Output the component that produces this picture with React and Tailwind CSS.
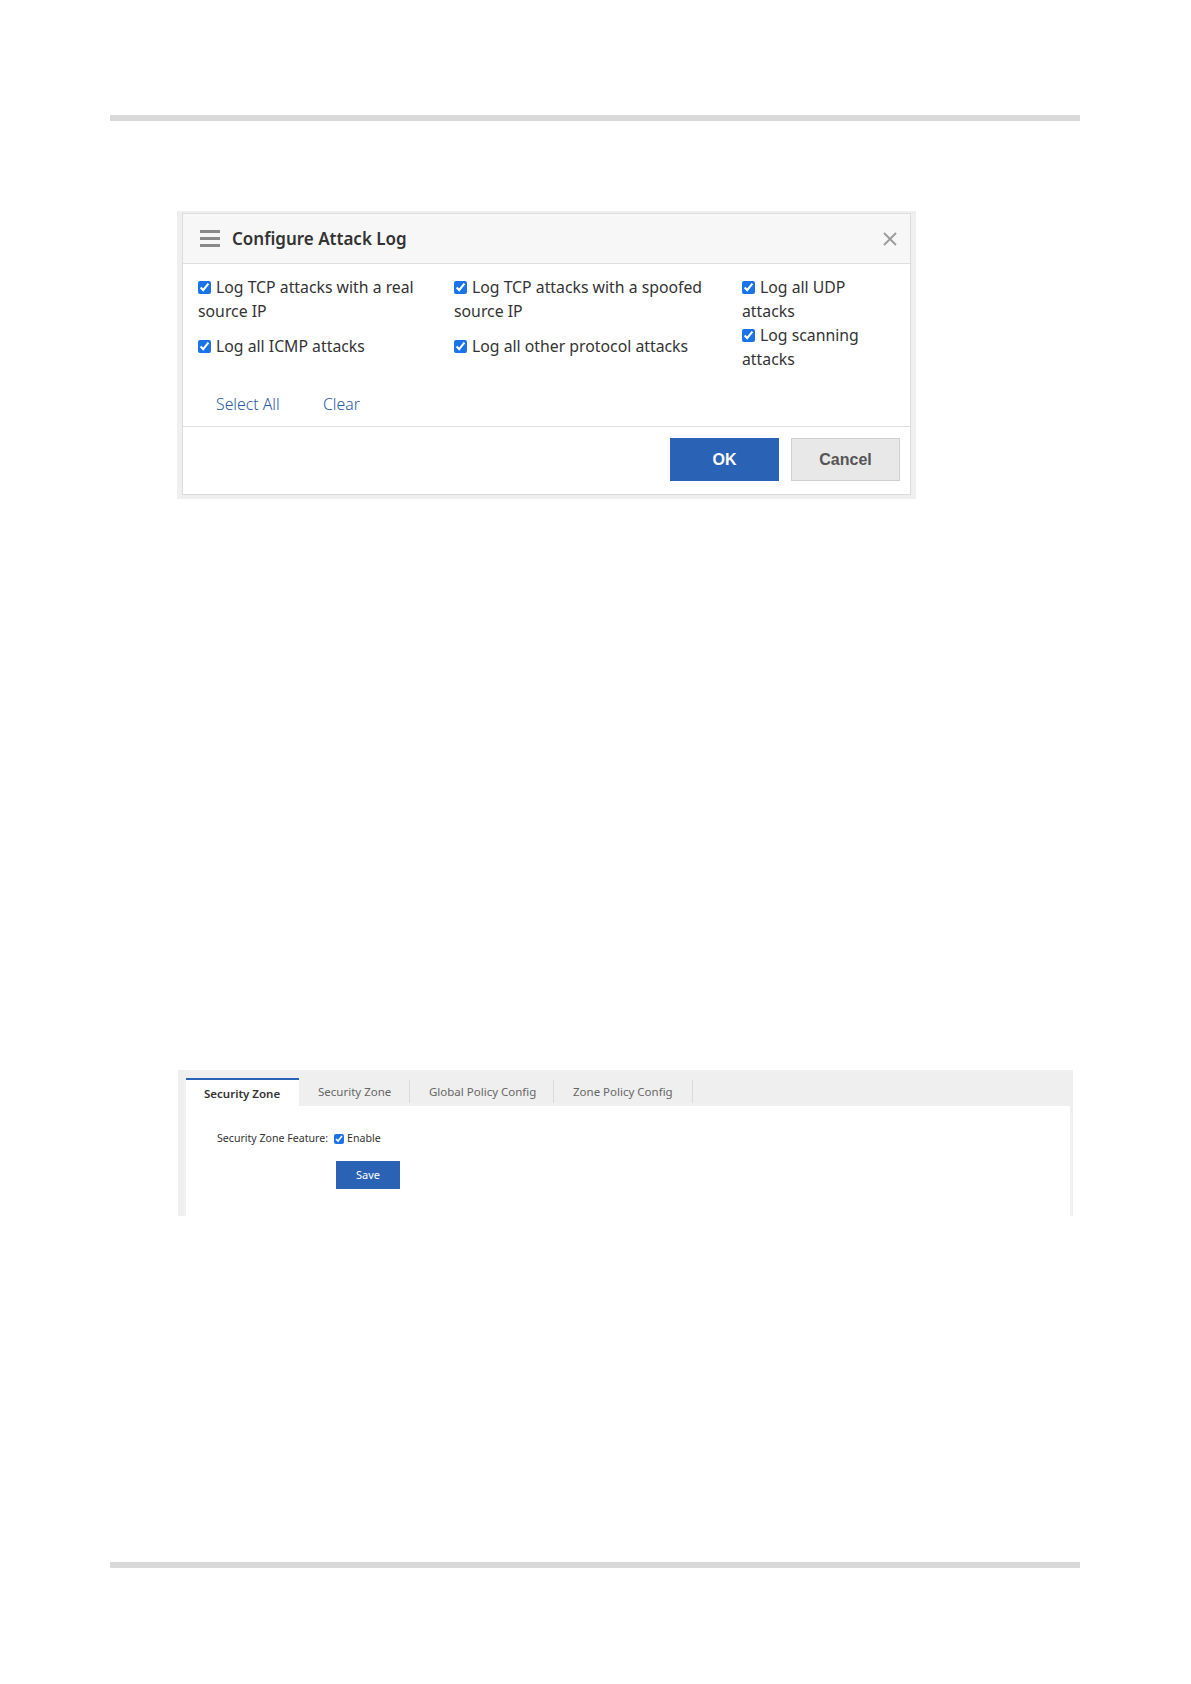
import React from "react";

const dlgFont = { fontFamily: '"Noto Sans", "Noto Sans CJK SC", sans-serif' };

function Check({ size = "w-[13px] h-[13px]" }) {
  return (
    <input
      type="checkbox"
      defaultChecked
      className={`${size} accent-[#1a73e8] align-[-1px] mr-[5px]`}
    />
  );
}

function Item({ lines }) {
  return (
    <div className="whitespace-nowrap leading-[24px]">
      <Check />
      {lines[0]}
      {lines[1] && (
        <>
          <br />
          {lines[1]}
        </>
      )}
    </div>
  );
}

function AttackLogDialog() {
  return (
    <div
      className="ml-[177px] mt-[90px] w-[739px] border-x-[5px] border-t-[2px] border-b-[4px] border-[#efefef] bg-white"
      style={dlgFont}
    >
      <div className="border border-[#dcdcdc]">
        {/* header */}
        <div className="h-[50px] bg-[#f7f7f7] border-b border-[#dedede] flex items-center pl-[17px] pr-[13px]">
          <svg width="20" height="17" viewBox="0 0 20 17" className="shrink-0">
            <rect x="0" y="0" width="20" height="3" fill="#8a8a8a" />
            <rect x="0" y="7" width="20" height="3" fill="#8a8a8a" />
            <rect x="0" y="14" width="20" height="3" fill="#8a8a8a" />
          </svg>
          <div className="ml-[12px] text-[17px] font-semibold text-[#333]">Configure Attack Log</div>
          <div className="flex-1" />
          <svg width="14" height="14" viewBox="0 0 14 14">
            <path d="M1 1 L13 13 M13 1 L1 13" stroke="#9a9a9a" strokeWidth="1.8" />
          </svg>
        </div>

        {/* body */}
        <div className="h-[163px] border-b border-[#dedede] pt-[11px] pl-[15px] text-[15.8px] text-[#333]">
          <div className="flex h-[117px]">
            <div className="w-[256px] flex flex-col gap-[11px]">
              <Item lines={["Log TCP attacks with a real", "source IP"]} />
              <Item lines={["Log all ICMP attacks"]} />
            </div>
            <div className="w-[288px] flex flex-col gap-[11px]">
              <Item lines={["Log TCP attacks with a spoofed", "source IP"]} />
              <Item lines={["Log all other protocol attacks"]} />
            </div>
            <div className="flex flex-col leading-[22px]">
              <Item lines={["Log all UDP", "attacks"]} />
              <Item lines={["Log scanning", "attacks"]} />
            </div>
          </div>
          <div className="flex pl-[18px] leading-[24px] text-[#2a5aa6] font-light">
            <span className="w-[107px]">Select All</span>
            <span>Clear</span>
          </div>
        </div>

        {/* footer */}
        <div className="h-[67px] flex justify-end items-start pt-[11px] pr-[10px] gap-[12px]" style={{ fontFamily: '"Liberation Sans", Arial, sans-serif' }}>
          <button className="w-[109px] h-[43px] bg-[#2a62b6] text-white font-bold text-[16px]">OK</button>
          <button className="w-[109px] h-[43px] bg-[#e8e8e8] border border-[#cfcfcf] text-[#555] font-bold text-[16px]">Cancel</button>
        </div>
      </div>
    </div>
  );
}

function ZonePanel() {
  const tabs = [
    { label: "Security Zone", w: "w-[111px]" },
    { label: "Global Policy Config", w: "w-[144px]" },
    { label: "Zone Policy Config", w: "w-[139px]" },
  ];
  return (
    <div
      className="ml-[178px] mt-[571px] w-[895px] h-[146px] bg-[#efefef] pt-[8px] pl-[8px] pr-[3px] flex flex-col"
      style={dlgFont}
    >
      <div className="h-[28px] flex items-stretch text-[11.5px]">
        <div className="w-[113px] bg-white border-t-2 border-[#2a62b6] pl-[18px] pt-[5px] font-semibold text-[#333] text-[11.5px]">
          Security Zone
        </div>
        {tabs.map((t) => (
          <div key={t.label} className={`${t.w} flex items-start pt-[2px]`}>
            <div className="flex-1 h-[23px] border-r border-[#dadada] pl-[19px] pt-[3px] text-[#666]">
              {t.label}
            </div>
          </div>
        ))}
      </div>
      <div className="flex-1 bg-white pl-[31px] pt-[25px] text-[10.6px] text-[#333]">
        <div className="flex items-center h-[16px]">
          <span className="w-[117px]">Security Zone Feature:</span>
          <input type="checkbox" defaultChecked className="w-[10px] h-[10px] accent-[#1a73e8] mr-[3px]" />
          <span>Enable</span>
        </div>
        <button className="ml-[119px] mt-[14px] w-[64px] h-[28px] bg-[#2a62b6] text-white text-[11px]">Save</button>
      </div>
    </div>
  );
}

export default function App() {
  return (
    <div className="w-[1191px] h-[1684px] bg-white overflow-hidden pt-[115px]">
      <div className="ml-[110px] w-[970px] h-[6px] bg-[#d9d9d9]" />
      <AttackLogDialog />
      <ZonePanel />
      <div className="ml-[110px] mt-[346px] w-[970px] h-[6px] bg-[#d9d9d9]" />
    </div>
  );
}
